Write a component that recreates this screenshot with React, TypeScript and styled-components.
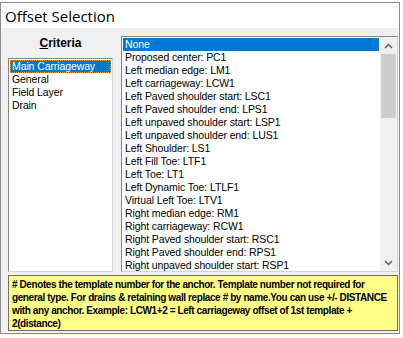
import { FC } from 'react';
import styled, { createGlobalStyle } from 'styled-components';

const GlobalStyle = createGlobalStyle({
  body: {
    margin: 0,
    background: '#ffffff',
    fontFamily: '"Liberation Sans", Arial, sans-serif',
  },
});

const Page = styled.div({
  width: '403px',
  height: '338px',
  overflow: 'hidden',
  paddingTop: '2px',
  boxSizing: 'border-box',
  background: '#ffffff',
});

const Window = styled.div({
  width: '400px',
  height: '332px',
  boxSizing: 'border-box',
  border: '1px solid #8a8a8a',
  display: 'flex',
  flexDirection: 'column',
  background: '#f0f0f0',
});

const TitleBar = styled.div({
  height: '25px',
  flexShrink: 0,
  background: '#ffffff',
  display: 'flex',
  alignItems: 'center',
  paddingLeft: '4px',
  fontFamily: '"Open Sans", "Noto Sans", sans-serif',
  fontSize: '15px',
  color: '#000000',
});

const Body = styled.div({
  flex: 1,
  display: 'flex',
  flexDirection: 'column',
  padding: '8px 1px 0 7px',
  gap: '3px',
});

const Columns = styled.div({
  display: 'flex',
  gap: '8px',
  height: '236px',
});

const LeftColumn = styled.div({
  width: '105px',
  display: 'flex',
  flexDirection: 'column',
});

const Label = styled.div({
  height: '22px',
  textAlign: 'center',
  fontWeight: 'bold',
  fontSize: '12px',
  lineHeight: '14px',
  u: {
    textDecorationThickness: '1px',
  },
});

const ListBox = styled.div({
  flex: 1,
  background: '#ffffff',
  borderTop: '1px solid #828790',
  borderLeft: '1px solid #828790',
  borderRight: '1px solid #d4d4d4',
  borderBottom: '1px solid #d4d4d4',
  display: 'flex',
  overflow: 'hidden',
});

const Items = styled.div({
  flex: 1,
  padding: '1px',
  display: 'flex',
  flexDirection: 'column',
  overflow: 'hidden',
});

const Item = styled.div<{ $selected?: boolean; $focused?: boolean }>((p) => ({
  height: '13px',
  lineHeight: '13px',
  flexShrink: 0,
  fontSize: '10.5px',
  letterSpacing: '-0.1px',
  paddingLeft: '2px',
  whiteSpace: 'nowrap',
  color: p.$selected ? '#ffffff' : '#000000',
  background: p.$selected ? '#0078d7' : 'transparent',
  outline: p.$focused ? '1px dotted #f0a030' : 'none',
  outlineOffset: '-1px',
}));

const ScrollBar = styled.div({
  width: '17px',
  background: '#f0f0f0',
  display: 'flex',
  flexDirection: 'column',
  alignItems: 'center',
});

const Arrow = styled.div({
  width: '17px',
  height: '17px',
  display: 'flex',
  alignItems: 'center',
  justifyContent: 'center',
  flexShrink: 0,
});

const Track = styled.div({
  flex: 1,
  width: '100%',
  display: 'flex',
  flexDirection: 'column',
  alignItems: 'center',
});

const Thumb = styled.div({
  width: '15px',
  height: '64px',
  background: '#cdcdcd',
});

const Note = styled.div({
  height: '56px',
  boxSizing: 'border-box',
  background: '#ffff88',
  border: '1px solid #6e6e6e',
  padding: '2px 2px 0 3px',
  display: 'flex',
  flexDirection: 'column',
  overflow: 'hidden',
});

const NoteLine = styled.div({
  height: '13px',
  lineHeight: '13px',
  fontWeight: 'bold',
  fontSize: '10px',
  letterSpacing: '-0.4px',
  color: '#000000',
  whiteSpace: 'nowrap',
});

const Chevron: FC<{ down?: boolean }> = ({ down }) => (
  <svg width="9" height="6" viewBox="0 0 9 6">
    <path
      d={down ? 'M1 1 L4.5 4.5 L8 1' : 'M1 5 L4.5 1.5 L8 5'}
      fill="none"
      stroke="#606060"
      strokeWidth="1.5"
    />
  </svg>
);

const criteria = ['Main Carriageway', 'General', 'Field Layer', 'Drain'];

const offsets = [
  'None',
  'Proposed center: PC1',
  'Left median edge: LM1',
  'Left carriageway: LCW1',
  'Left Paved shoulder start: LSC1',
  'Left Paved shoulder end: LPS1',
  'Left unpaved shoulder start: LSP1',
  'Left unpaved shoulder end: LUS1',
  'Left Shoulder: LS1',
  'Left Fill Toe: LTF1',
  'Left Toe: LT1',
  'Left Dynamic Toe: LTLF1',
  'Virtual Left Toe: LTV1',
  'Right median edge: RM1',
  'Right carriageway: RCW1',
  'Right Paved shoulder start: RSC1',
  'Right Paved shoulder end: RPS1',
  'Right unpaved shoulder start: RSP1',
];

const noteLines = [
  '# Denotes the template number for the anchor. Template number not required for',
  'general type. For drains & retaining wall replace # by name.You can use +/- DISTANCE',
  'with any anchor. Example: LCW1+2 = Left carriageway offset of 1st template +',
  '2(distance)',
];

export default function App() {
  return (
    <>
      <GlobalStyle />
      <Page>
        <Window>
          <TitleBar>Offset Selection</TitleBar>
          <Body>
            <Columns>
              <LeftColumn>
                <Label>
                  <u>C</u>riteria
                </Label>
                <ListBox>
                  <Items>
                    {criteria.map((c, i) => (
                      <Item key={c} $selected={i === 0} $focused={i === 0}>
                        {c}
                      </Item>
                    ))}
                  </Items>
                </ListBox>
              </LeftColumn>
              <ListBox>
                <Items>
                  {offsets.map((o, i) => (
                    <Item key={o} $selected={i === 0}>
                      {o}
                    </Item>
                  ))}
                </Items>
                <ScrollBar>
                  <Arrow>
                    <Chevron />
                  </Arrow>
                  <Track>
                    <Thumb />
                  </Track>
                  <Arrow>
                    <Chevron down />
                  </Arrow>
                </ScrollBar>
              </ListBox>
            </Columns>
            <Note>
              {noteLines.map((l) => (
                <NoteLine key={l}>{l}</NoteLine>
              ))}
            </Note>
          </Body>
        </Window>
      </Page>
    </>
  );
}
